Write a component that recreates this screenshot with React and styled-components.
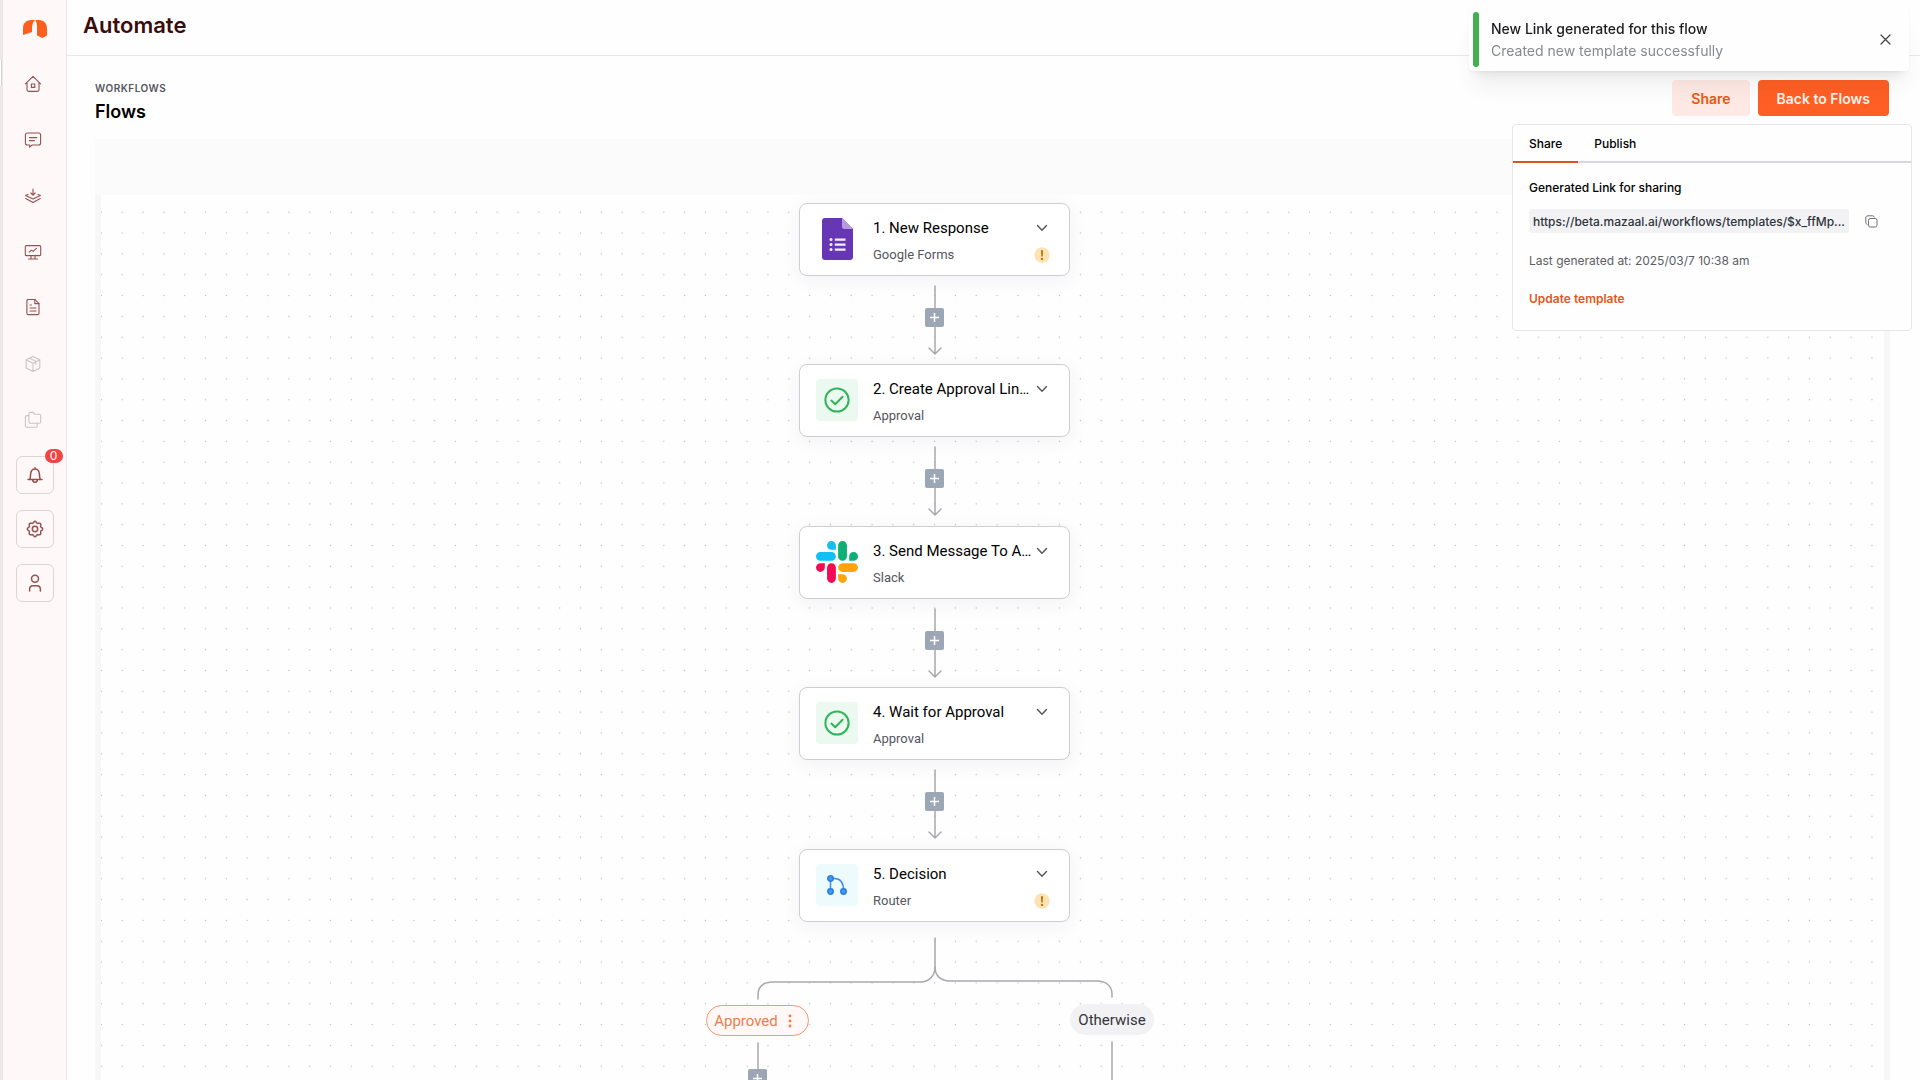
import React from "react";
import styled, { createGlobalStyle } from "styled-components";

const GlobalStyle = createGlobalStyle`
  *, *::before, *::after { box-sizing: border-box; }
  body { margin: 0; background: #fefefe; font-family: Inter, "Liberation Sans", sans-serif; color: #000; }
  button { font: inherit; border: 0; padding: 0; background: none; cursor: pointer; }
  h1, h2, h3, p { margin: 0; }
  a { text-decoration: none; color: inherit; }
`;

const Shell = styled.div`
  display: flex;
  height: 100vh;
  overflow: hidden;
`;

const Sidebar = styled.aside`
  position: relative;
  flex: none;
  width: 67px;
  display: flex;
  flex-direction: column;
  align-items: center;
  padding-right: 3px;
  background: #fef8f8;
  border-left: 3px solid #ebe8ea;
  border-right: 1px solid #e8e4e8;
`;

const EdgeHandle = styled.span`
  position: absolute;
  left: -3px;
  top: 60px;
  width: 2px;
  height: 26px;
  background: #fff;
  border-right: 1px solid #d6d3d6;
`;

const Brand = styled.a`
  display: flex;
  height: 56px;
  align-items: center;
  padding: 2px 0 0 4px;
`;

const Nav = styled.nav`
  display: flex;
  flex-direction: column;
  align-items: center;
`;

const NavLink = styled.a`
  display: grid;
  place-items: center;
  width: 40px;
  height: 56px;
  color: ${(p) => (p.$muted ? "#c9c5c8" : "#96504f")};
`;

const Tools = styled.div`
  display: flex;
  flex-direction: column;
  gap: 16px;
  margin-top: 8px;
  padding-left: 3px;
`;

const ToolButton = styled.button`
  position: relative;
  display: grid;
  place-items: center;
  width: 38px;
  height: 38px;
  border: 1px solid #dcd6d7;
  border-radius: 6px;
  color: #96504f;
`;

const Badge = styled.span`
  position: absolute;
  top: -8px;
  right: -10px;
  width: 18px;
  height: 14px;
  border-radius: 7px;
  background: #ee4444;
  color: #fff;
  font-size: 12px;
  line-height: 14px;
  text-align: center;
`;

const Main = styled.main`
  flex: 1;
  min-width: 0;
  display: flex;
  flex-direction: column;
`;

const TopBar = styled.header`
  flex: none;
  height: 56px;
  padding: 11px 16px;
  border-bottom: 1px solid #e9e6ea;
`;

const AppTitle = styled.h1`
  font-size: 22px;
  line-height: 28px;
  font-weight: 600;
  font-optical-sizing: none;
  color: #3a0d0d;
`;

const PageHead = styled.div`
  flex: none;
  display: flex;
  justify-content: space-between;
  align-items: flex-start;
  height: 83px;
  padding: 24px 31px 0 28px;
`;

const Overline = styled.p`
  font-size: 10px;
  line-height: 16px;
  font-weight: 600;
  letter-spacing: 0.05em;
  color: #55555c;
`;

const PageTitle = styled.h2`
  margin-top: 4px;
  font-size: 18px;
  line-height: 24px;
  font-weight: 600;
  font-optical-sizing: none;
`;

const Actions = styled.div`
  position: relative;
  display: flex;
  gap: 8px;
`;

const ActionButton = styled.button`
  height: 36px;
  padding: 0 19px;
  border-radius: 4px;
  font-size: 14px;
  font-weight: 600;
  color: ${(p) => (p.$primary ? "#fff3ec" : "#ea580c")};
  background: ${(p) => (p.$primary ? "#ff5f24" : "#ffe9e4")};
`;

const SharePanel = styled.section`
  position: absolute;
  z-index: 5;
  top: 44px;
  right: -23px;
  width: 400px;
  height: 207px;
  background: #fefefe;
  border: 1px solid #e6e5ea;
  border-radius: 4px;
`;

const Tabs = styled.div`
  display: flex;
  border-bottom: 2px solid #d9d9dd;
`;

const Tab = styled.button`
  height: 38px;
  margin-bottom: -2px;
  padding: 0 16px;
  font-size: 12px;
  font-weight: 500;
  border-bottom: 2px solid ${(p) => (p.$active ? "#d9551b" : "transparent")};
`;

const PanelBody = styled.div`
  display: flex;
  flex-direction: column;
  align-items: flex-start;
  padding: 16px;
`;

const FieldLabel = styled.label`
  font-size: 12px;
  line-height: 18px;
  font-weight: 500;
`;

const LinkRow = styled.div`
  display: flex;
  align-items: center;
  gap: 16px;
  margin-top: 12px;
`;

const LinkInput = styled.input`
  width: 320px;
  height: 24px;
  padding: 0 4px;
  border: 0;
  border-radius: 2px;
  background: #f2f2f4;
  color: #2f343d;
  font: 500 12px Inter, sans-serif;
  outline: none;
`;

const IconButton = styled.button`
  display: grid;
  place-items: center;
  color: ${(p) => p.$color || "#6f6f76"};
`;

const Stamp = styled.p`
  margin-top: 19px;
  font-size: 12px;
  line-height: 18px;
  color: #5d5d64;
`;

const TextButton = styled.button`
  margin-top: 20px;
  font-size: 12px;
  line-height: 18px;
  font-weight: 600;
  color: #e5571a;
`;

const Toast = styled.div`
  position: fixed;
  z-index: 10;
  top: 8px;
  right: 11px;
  width: 440px;
  display: flex;
  align-items: center;
  padding: 4px;
  background: #fefefe;
  border-radius: 4px;
  box-shadow: 0 1px 3px rgba(0, 0, 0, 0.05), 0 20px 25px -5px rgba(0, 0, 0, 0.06),
    0 10px 10px -5px rgba(0, 0, 0, 0.06);
`;

const ToastBar = styled.span`
  width: 6px;
  height: 55px;
  border-radius: 3px;
  background: #40b050;
`;

const ToastText = styled.div`
  flex: 1;
  margin-left: 12px;
  font-size: 14px;
  line-height: 22px;
`;

const ToastTitle = styled.p`
  font-weight: 500;
  color: #1c1c1f;
`;

const ToastNote = styled.p`
  color: #868a90;
`;

const ToastClose = styled(IconButton)`
  width: 40px;
  height: 40px;
`;

const Board = styled.section`
  flex: 1;
  min-height: 0;
  display: flex;
  flex-direction: column;
  margin: 0 30px 0 28px;
`;

const BoardBar = styled.div`
  flex: none;
  height: 56px;
  background: #fbfbfb;
`;

const Canvas = styled.div`
  position: relative;
  flex: 1;
  overflow: hidden;
  border: solid #f8f6f9;
  border-width: 0 6px;
  font-family: Roboto, sans-serif;
`;

const Layer = styled.svg`
  position: absolute;
  inset: 0;
  width: 100%;
  height: 100%;
`;

const Node = styled.article`
  position: absolute;
  left: ${(p) => p.$x}px;
  top: ${(p) => p.$y}px;
  display: flex;
  width: 271px;
  height: 73px;
  padding: 11px 16px 0;
  background: #fff;
  border: 1px solid #cfcdd2;
  border-radius: 8px;
  box-shadow: 0 4px 20px rgba(60, 40, 80, 0.06);
`;

const NodeIcon = styled.span`
  flex: none;
  display: grid;
  place-items: center;
  width: 42px;
  height: 42px;
  margin-top: 3px;
  border-radius: 4px;
  background: ${(p) => p.$bg};
`;

const NodeText = styled.div`
  flex: 1;
  min-width: 0;
  margin-left: 15px;
  white-space: nowrap;
`;

const NodeTitle = styled.h3`
  font-size: 15px;
  line-height: 27px;
  font-weight: 400;
`;

const NodeSub = styled.p`
  font-size: 13px;
  line-height: 26px;
  color: #54565e;
`;

const NodeAside = styled.div`
  flex: none;
  display: flex;
  flex-direction: column;
  align-items: center;
  width: 22px;
`;

const Toggle = styled(IconButton)`
  width: 22px;
  height: 26px;
`;

const Warning = styled.span`
  display: grid;
  place-items: center;
  height: 28px;
`;

const AddStep = styled.button`
  position: absolute;
  left: ${(p) => p.$x}px;
  top: ${(p) => p.$y}px;
  display: grid;
  place-items: center;
  width: 19px;
  height: 19px;
  border-radius: 2px;
  background: #9ca6b4;
`;

const Branch = styled.div`
  position: absolute;
  left: ${(p) => p.$x}px;
  top: ${(p) => p.$y}px;
  display: flex;
  align-items: center;
  justify-content: center;
  gap: 5px;
  width: ${(p) => p.$w}px;
  height: 31px;
  padding-right: ${(p) => (p.$active ? "4px" : "0")};
  border-radius: 16px;
  font-size: 15px;
  color: ${(p) => (p.$active ? "#ef7d4c" : "#35353a")};
  background: ${(p) => (p.$active ? "#fff8f6" : "#f2f2f4")};
  border: 1px solid ${(p) => (p.$active ? "#f29a70" : "#f2f2f4")};
`;

const Glyph = ({ children, size = 18, weight = 1.1 }) => (
  <svg width={size} height={size} viewBox="0 0 18 18" fill="none" stroke="currentColor"
    strokeWidth={weight} strokeLinecap="round" strokeLinejoin="round" aria-hidden="true">
    {children}
  </svg>
);

const navItems = [
  { label: "Home", art: <><path d="M1.4 8.8 9 1.4l7.6 7.4M3 7.4v7.4c0 1 .6 1.6 1.6 1.6h8.8c1 0 1.6-.6 1.6-1.6V7.4" /><rect x="7.4" y="9" width="3.4" height="3.4" /></> },
  { label: "Chat", art: <><path d="M3.4 2h11.2c1.2 0 2 .8 2 2v8c0 1.200-.8 2-2 2H8.200l-2.600 2.200V14H3.400c-1.200 0-2-.8-2-2V4c0-1.200.8-2 2-2Z" /><path d="M5.400 6.600h7.400M5.400 9.600h5" /></> },
  { label: "Sources", art: <><path d="M9 2v6M6.800 6 9 8.200 11.200 6M4 7.400l-2.400 1L9 12l7.400-3.600-2.400-1M1.800 11.400 9 15.400l7.200-4" /></> },
  { label: "Reports", art: <><rect x="1.300" y="2.600" width="15.400" height="10" rx="1" /><path d="m5.200 9.200 2.200-2 1.600 1.200 3.400-3M7 12.800v3M11 12.800v3M4.600 16h9" /></> },
  { label: "Documents", art: <><path d="M4.400.4h6.400L15 4.600v9.600c0 .8-.6 1.400-1.400 1.400H4.400c-.9 0-1.500-.6-1.500-1.400V1.800c0-.8.6-1.400 1.500-1.400Z" /><path d="M10.800.6v4H15M6 6h1.400M6 9h6M6 12h6" /></> },
  { label: "Packages", muted: true, art: <><path d="m9 1.400 6.800 3.300v8.200L9 16.600l-6.800-3.700V4.700L9 1.400ZM2.400 4.900 9 8.200l6.600-3.300M9 8.200v8.200M5.600 3.200l6.600 3.300M12 6.600v2.600" /></> },
  { label: "Folders", muted: true, art: <><path d="M6.400 1.400h3l1.200 1.800h4.600c.9 0 1.500.6 1.500 1.400v6.200c0 .9-.6 1.500-1.500 1.500H6.400c-.9 0-1.500-.6-1.500-1.500V2.900c0-.9.600-1.500 1.500-1.500Z" /><path d="M4.800 4.600H2.900c-.9 0-1.500.6-1.500 1.500v8.700c0 .9.600 1.500 1.500 1.500h8.800c.9 0 1.500-.6 1.500-1.500v-2.400" /></> },
];

const gearOutline = Array.from({ length: 96 }, (_, i) => {
  const a = (i / 96) * Math.PI * 2;
  const r = 6.9 + 0.75 * Math.cos(8 * a);
  return `${i ? "L" : "M"}${(9 + r * Math.cos(a)).toFixed(2)} ${(9 + r * Math.sin(a)).toFixed(2)}`;
}).join("") + "Z";

const BellIcon = () => (
  <Glyph weight={1.5}>
    <path d="M9 1.800v1M2 13.400h14M3.800 13.200c.6-1.200.6-3 .8-5.200C4.900 4.800 6.600 2.900 9 2.900s4.100 1.900 4.400 5.100c.2 2.200.2 4 .8 5.200M6.600 13.600c0 1.600 1 2.600 2.400 2.600s2.400-1 2.400-2.600" />
  </Glyph>
);
const GearIcon = () => (
  <Glyph weight={1.5}>
    <circle cx="9" cy="9" r="2.700" />
    <path d={gearOutline} />
  </Glyph>
);
const UserIcon = () => (
  <Glyph weight={1.5}>
    <circle cx="9" cy="4.800" r="3.500" />
    <path d="M3.600 17v-1.600c0-2.200 1.400-3.600 3.600-3.600h3.600c2.200 0 3.600 1.400 3.600 3.600V17" />
  </Glyph>
);

const FormsLogo = () => (
  <svg width="31" height="42" viewBox="0 0 31 42" aria-hidden="true">
    <path d="M3 0h17l11 11v28a3 3 0 0 1-3 3H3a3 3 0 0 1-3-3V3a3 3 0 0 1 3-3Z" fill="#6736b5" />
    <path d="M20 0v8.500a2.500 2.500 0 0 0 2.500 2.500H31Z" fill="#b59ddc" />
    <g fill="#f4effb">
      <circle cx="9" cy="21.600" r="1.500" /><circle cx="9" cy="26.600" r="1.500" /><circle cx="9" cy="31.600" r="1.500" />
      <path d="M12.800 20.500h10.700v2.200H12.800zM12.800 25.500h10.700v2.200H12.800zM12.800 30.500h10.700v2.200H12.800z" />
    </g>
  </svg>
);
const ApprovalLogo = () => (
  <svg width="26" height="26" viewBox="0 0 26 26" fill="none" stroke="#2fb457" strokeWidth="2" strokeLinecap="round" strokeLinejoin="round" aria-hidden="true">
    <circle cx="13" cy="13" r="11.600" /><path d="m7.400 13.600 3.800 3.600 7.400-7.400" />
  </svg>
);
const SlackLogo = () => (
  <svg width="42" height="42" viewBox="0 0 122.800 122.800" aria-hidden="true">
    <path d="M25.800 77.600c0 7.100-5.800 12.900-12.900 12.900S0 84.700 0 77.600s5.800-12.900 12.900-12.900h12.900v12.900zm6.500 0c0-7.100 5.800-12.900 12.900-12.900s12.900 5.800 12.900 12.900v32.300c0 7.100-5.800 12.900-12.900 12.900s-12.900-5.800-12.900-12.900V77.600z" fill="#f30a56" />
    <path d="M45.200 25.800c-7.100 0-12.900-5.800-12.900-12.900S38.100 0 45.200 0s12.900 5.800 12.900 12.900v12.900H45.200zm0 6.500c7.100 0 12.900 5.800 12.900 12.900s-5.800 12.900-12.900 12.900H12.900C5.800 58.100 0 52.300 0 45.200s5.800-12.900 12.900-12.900h32.300z" fill="#10bff3" />
    <path d="M97 45.200c0-7.100 5.800-12.900 12.900-12.900s12.900 5.800 12.900 12.900-5.800 12.900-12.900 12.900H97V45.200zm-6.500 0c0 7.100-5.800 12.900-12.900 12.900s-12.900-5.800-12.900-12.900V12.900C64.700 5.800 70.500 0 77.600 0s12.900 5.800 12.900 12.900v32.300z" fill="#0cb074" />
    <path d="M77.600 97c7.100 0 12.900 5.800 12.900 12.900s-5.800 12.900-12.900 12.900-12.900-5.800-12.900-12.900V97h12.900zm0-6.500c-7.100 0-12.900-5.800-12.900-12.900s5.800-12.900 12.900-12.900h32.300c7.100 0 12.900 5.800 12.900 12.900s-5.800 12.900-12.900 12.900H77.600z" fill="#f9a50b" />
  </svg>
);
const RouterLogo = () => (
  <svg width="22" height="22" viewBox="0 0 22 22" fill="none" stroke="#3d8fec" strokeWidth="1.500" aria-hidden="true">
    <path d="M4.500 4v14M4.500 4.500h4c5.500 0 9 3.500 9 12" />
    <g fill="#3d9bf2" stroke="#2a7be4"><circle cx="4.500" cy="4.500" r="2.700" /><circle cx="4.500" cy="17.500" r="2.700" /><circle cx="17.500" cy="17.500" r="2.700" /></g>
  </svg>
);

const steps = [
  { y: 8, title: "1. New Response", app: "Google Forms", logo: <FormsLogo />, bg: "transparent", warn: true },
  { y: 169, title: "2. Create Approval Lin…", app: "Approval", logo: <ApprovalLogo />, bg: "#ebf9f0" },
  { y: 331, title: "3. Send Message To A…", app: "Slack", logo: <SlackLogo />, bg: "transparent" },
  { y: 492, title: "4. Wait for Approval", app: "Approval", logo: <ApprovalLogo />, bg: "#ebf9f0" },
  { y: 654, title: "5. Decision", app: "Router", logo: <RouterLogo />, bg: "#edfbfd", warn: true },
];
const NODE_X = 698;
const LINE_X = 834;

function AddButton({ x, y }) {
  return (
    <AddStep $x={x} $y={y} aria-label="Add step">
      <svg width="11" height="11" viewBox="0 0 11 11" stroke="#fff" strokeWidth="1.500" aria-hidden="true">
        <path d="M5.500 1v9M1 5.500h9" />
      </svg>
    </AddStep>
  );
}

function Step({ step }) {
  return (
    <Node $x={NODE_X} $y={step.y}>
      <NodeIcon $bg={step.bg}>{step.logo}</NodeIcon>
      <NodeText>
        <NodeTitle>{step.title}</NodeTitle>
        <NodeSub>{step.app}</NodeSub>
      </NodeText>
      <NodeAside>
        <Toggle aria-label="Step options" $color="#55555c">
          <svg width="12" height="8" viewBox="0 0 12 8" fill="none" stroke="currentColor" strokeWidth="1.400" strokeLinecap="round" strokeLinejoin="round">
            <path d="m1.500 1.500 4.500 4.700 4.500-4.700" />
          </svg>
        </Toggle>
        {step.warn && (
          <Warning>
            <svg width="16" height="16" viewBox="0 0 16 16" aria-hidden="true">
              <circle cx="8" cy="8" r="7.700" fill="#fde3b4" />
              <path d="M6.900 3.200h2.200l-.4 6.200H7.300Z" fill="#b9770f" />
              <circle cx="8" cy="11.900" r="1.200" fill="#b9770f" />
            </svg>
          </Warning>
        )}
      </NodeAside>
    </Node>
  );
}

export default function App() {
  return (
    <>
      <GlobalStyle />
      <Shell>
        <Sidebar>
          <EdgeHandle />
          <Brand href="#" aria-label="Mazaal">
            <svg width="24" height="18" viewBox="0 0 24 18" aria-hidden="true">
              <path d="M0 15V8.500C0 3.500 3 0 8.500 0H12C10 2 9 4.500 9 8v4Z" fill="#fb5f1e" />
              <path d="M12.500 0H15.500C21 0 24 3.500 24 8.500V15.500l-4.500 2.500-5.500-2.500V8c0-3-.3-5.500-1.500-8Z" fill="#fb5f1e" />
            </svg>
          </Brand>
          <Nav>
            {navItems.map((item) => (
              <NavLink key={item.label} href="#" aria-label={item.label} $muted={item.muted}>
                <Glyph>{item.art}</Glyph>
              </NavLink>
            ))}
          </Nav>
          <Tools>
            <ToolButton aria-label="Notifications"><BellIcon /><Badge>0</Badge></ToolButton>
            <ToolButton aria-label="Settings"><GearIcon /></ToolButton>
            <ToolButton aria-label="Account"><UserIcon /></ToolButton>
          </Tools>
        </Sidebar>

        <Main>
          <TopBar><AppTitle>Automate</AppTitle></TopBar>
          <PageHead>
            <div>
              <Overline>WORKFLOWS</Overline>
              <PageTitle>Flows</PageTitle>
            </div>
            <Actions>
              <ActionButton>Share</ActionButton>
              <ActionButton $primary>Back to Flows</ActionButton>
              <SharePanel>
                <Tabs role="tablist">
                  <Tab role="tab" aria-selected="true" $active>Share</Tab>
                  <Tab role="tab" aria-selected="false">Publish</Tab>
                </Tabs>
                <PanelBody>
                  <FieldLabel htmlFor="share-link">Generated Link for sharing</FieldLabel>
                  <LinkRow>
                    <LinkInput id="share-link" readOnly value="https://beta.mazaal.ai/workflows/templates/$x_ffMp..." />
                    <IconButton aria-label="Copy link">
                      <svg width="13" height="13" viewBox="0 0 13 13" fill="none" stroke="currentColor" strokeLinecap="round">
                        <rect x="3.500" y="3.500" width="8.500" height="8.500" rx="1.800" />
                        <path d="M2 9.300C1.200 9 .8 8.500.8 7.600V2.800C.8 1.600 1.600.8 2.800.8h4.800c.9 0 1.400.4 1.700 1.200" />
                      </svg>
                    </IconButton>
                  </LinkRow>
                  <Stamp>Last generated at: 2025/03/7 10:38 am</Stamp>
                  <TextButton>Update template</TextButton>
                </PanelBody>
              </SharePanel>
            </Actions>
          </PageHead>

          <Board>
            <BoardBar />
            <Canvas>
              <Layer aria-hidden="true">
                <defs>
                  <pattern id="dots" x="-10" y="6.800" width="20.830" height="20.830" patternUnits="userSpaceOnUse">
                    <circle cx="10.400" cy="10.400" r="0.700" fill="#bdbbc2" />
                  </pattern>
                </defs>
                <rect y="10" width="100%" height="100%" fill="url(#dots)" />
                <g fill="none" stroke="#a9a8ad" strokeWidth="1.500" strokeLinecap="round">
                  {steps.slice(0, 4).map((s) => (
                    <path key={s.y} d={`M${LINE_X} ${s.y + 83}v68m-6 -6l6 6l6 -6`} />
                  ))}
                  <path d="M834 743v29c0 9-6 15-15 15H672c-9 0-15 4-15 13v4" />
                  <path d="M834 772c0 9 6 14 15 14h147c9 0 15 5 15 13v3" />
                  <path d="M657 848v60M1011 847v60" />
                </g>
              </Layer>
              {steps.map((s) => <Step key={s.title} step={s} />)}
              {steps.slice(0, 4).map((s) => <AddButton key={s.y} x={824} y={s.y + 105} />)}
              <Branch $x={605} $y={810} $w={103} $active>
                Approved
                <IconButton aria-label="Branch options" $color="#ef7d4c">
                  <svg width="14" height="14" viewBox="0 0 14 14" fill="currentColor">
                    <circle cx="7" cy="2" r="1.400" /><circle cx="7" cy="7" r="1.400" /><circle cx="7" cy="12" r="1.400" />
                  </svg>
                </IconButton>
              </Branch>
              <Branch $x={969} $y={809} $w={84}>Otherwise</Branch>
              <AddButton x={647} y={874} />
            </Canvas>
          </Board>
        </Main>
      </Shell>

      <Toast role="status">
        <ToastBar />
        <ToastText>
          <ToastTitle>New Link generated for this flow</ToastTitle>
          <ToastNote>Created new template successfully</ToastNote>
        </ToastText>
        <ToastClose aria-label="Dismiss" $color="#3f3f45">
          <svg width="11" height="11" viewBox="0 0 11 11" stroke="currentColor" strokeWidth="1.200" strokeLinecap="round">
            <path d="m1 1 9 9M10 1l-9 9" />
          </svg>
        </ToastClose>
      </Toast>
    </>
  );
}
